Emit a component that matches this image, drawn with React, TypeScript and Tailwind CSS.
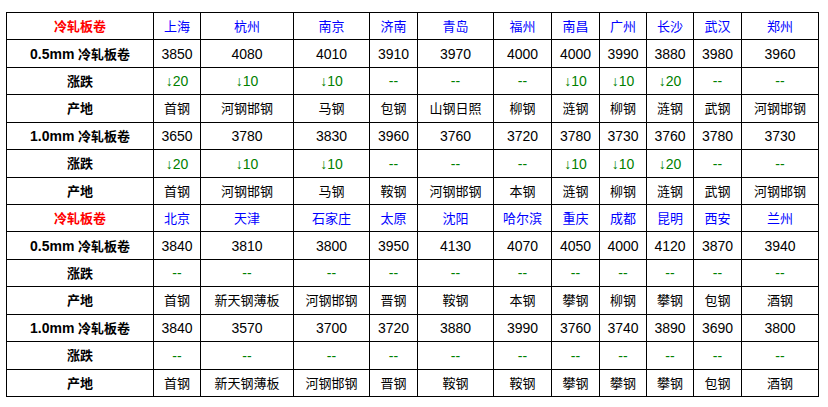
const sections = [
  {
    cities: ["上海", "杭州", "南京", "济南", "青岛", "福州", "南昌", "广州", "长沙", "武汉", "郑州"],
    thin: ["3850", "4080", "4010", "3910", "3970", "4000", "4000", "3990", "3880", "3980", "3960"],
    thinChange: ["↓20", "↓10", "↓10", "--", "--", "--", "↓10", "↓10", "↓20", "--", "--"],
    thinOrigin: ["首钢", "河钢邯钢", "马钢", "包钢", "山钢日照", "柳钢", "涟钢", "柳钢", "涟钢", "武钢", "河钢邯钢"],
    thick: ["3650", "3780", "3830", "3960", "3760", "3720", "3780", "3730", "3760", "3780", "3730"],
    thickChange: ["↓20", "↓10", "↓10", "--", "--", "--", "↓10", "↓10", "↓20", "--", "--"],
    thickOrigin: ["首钢", "河钢邯钢", "马钢", "鞍钢", "河钢邯钢", "本钢", "涟钢", "柳钢", "涟钢", "武钢", "河钢邯钢"],
  },
  {
    cities: ["北京", "天津", "石家庄", "太原", "沈阳", "哈尔滨", "重庆", "成都", "昆明", "西安", "兰州"],
    thin: ["3840", "3810", "3800", "3950", "4130", "4070", "4050", "4000", "4120", "3870", "3940"],
    thinChange: Array(11).fill("--"),
    thinOrigin: ["首钢", "新天钢薄板", "河钢邯钢", "晋钢", "鞍钢", "本钢", "攀钢", "柳钢", "攀钢", "包钢", "酒钢"],
    thick: ["3840", "3570", "3700", "3720", "3880", "3990", "3760", "3740", "3890", "3690", "3800"],
    thickChange: Array(11).fill("--"),
    thickOrigin: ["首钢", "新天钢薄板", "河钢邯钢", "晋钢", "鞍钢", "鞍钢", "攀钢", "攀钢", "攀钢", "包钢", "酒钢"],
  },
];

const widths = [147, 47, 93, 76, 48, 76, 58, 48, 47, 47, 48, 77];

const cell = "border border-black text-center align-middle p-0 whitespace-nowrap";

function Row({
  label,
  values,
  color,
  h,
  labelColor,
  size = "text-[13px]",
}: {
  label: React.ReactNode;
  values: string[];
  color: string;
  h: string;
  labelColor?: string;
  size?: string;
}) {
  return (
    <tr className={h}>
      <td className={`${cell} text-[13px] font-bold ${labelColor ?? "text-black"}`}>{label}</td>
      {values.map((v, i) => (
        <td key={i} className={`${cell} ${size} ${color}`}>
          {v}
        </td>
      ))}
    </tr>
  );
}

function SizeLabel({ mm }: { mm: string }) {
  return (
    <>
      <span className="text-[14px]">{mm}</span> 冷轧板卷
    </>
  );
}

export default function App() {
  return (
    <div className="w-[828px] h-[407px] bg-white pt-[12px] pl-[6px]">
      <table
        className="border-collapse table-fixed w-[812px] leading-none text-black"
        style={{ fontFamily: '"Liberation Sans", "Noto Sans CJK SC", sans-serif' }}
      >
        <colgroup>
          {widths.map((w, i) => (
            <col key={i} style={{ width: w }} />
          ))}
        </colgroup>
        <tbody>
          {sections.map((s, si) => [
            <Row key={`c${si}`} label="冷轧板卷" values={s.cities} color="text-[#0000ff]" labelColor="text-[#ff0000]" h="h-[27px]" />,
            <Row key={`a${si}`} label={<SizeLabel mm="0.5mm" />} values={s.thin} color="text-black" h="h-[28px]" size="text-[14px]" />,
            <Row key={`b${si}`} label="涨跌" values={s.thinChange} color="text-[#008000]" h="h-[27px]" size="text-[14px]" />,
            <Row key={`d${si}`} label="产地" values={s.thinOrigin} color="text-black" h="h-[28px]" />,
            <Row key={`e${si}`} label={<SizeLabel mm="1.0mm" />} values={s.thick} color="text-black" h="h-[27px]" size="text-[14px]" />,
            <Row key={`f${si}`} label="涨跌" values={s.thickChange} color="text-[#008000]" h="h-[28px]" size="text-[14px]" />,
            <Row key={`g${si}`} label="产地" values={s.thickOrigin} color="text-black" h="h-[27px]" />,
          ])}
        </tbody>
      </table>
    </div>
  );
}
